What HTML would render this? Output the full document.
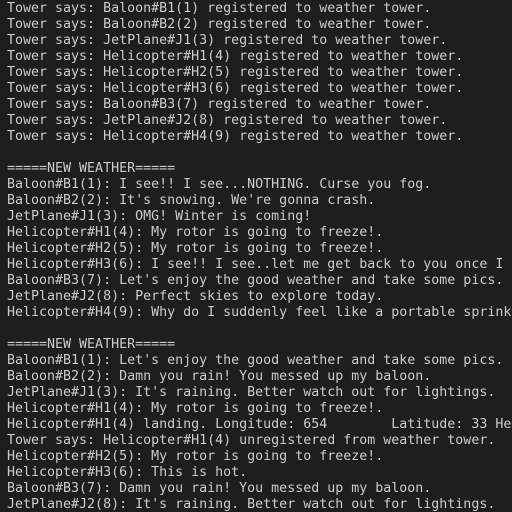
<!DOCTYPE html>
<html><head><style>
html,body{margin:0;padding:0;background:#1e1e1e;width:512px;height:512px;overflow:hidden}
pre{margin:0;position:absolute;left:7px;top:1px;width:505px;height:511px;overflow:hidden;font-family:"DejaVu Sans Mono","Liberation Mono",monospace;font-size:13.3px;line-height:16px;color:#cccccc;white-space:pre}
</style></head><body><pre>Tower says: Baloon#B1(1) registered to weather tower.
Tower says: Baloon#B2(2) registered to weather tower.
Tower says: JetPlane#J1(3) registered to weather tower.
Tower says: Helicopter#H1(4) registered to weather tower.
Tower says: Helicopter#H2(5) registered to weather tower.
Tower says: Helicopter#H3(6) registered to weather tower.
Tower says: Baloon#B3(7) registered to weather tower.
Tower says: JetPlane#J2(8) registered to weather tower.
Tower says: Helicopter#H4(9) registered to weather tower.

=====NEW WEATHER=====
Baloon#B1(1): I see!! I see...NOTHING. Curse you fog.
Baloon#B2(2): It's snowing. We're gonna crash.
JetPlane#J1(3): OMG! Winter is coming!
Helicopter#H1(4): My rotor is going to freeze!.
Helicopter#H2(5): My rotor is going to freeze!.
Helicopter#H3(6): I see!! I see..let me get back to you once I
Baloon#B3(7): Let's enjoy the good weather and take some pics.
JetPlane#J2(8): Perfect skies to explore today.
Helicopter#H4(9): Why do I suddenly feel like a portable sprinkler

=====NEW WEATHER=====
Baloon#B1(1): Let's enjoy the good weather and take some pics.
Baloon#B2(2): Damn you rain! You messed up my baloon.
JetPlane#J1(3): It's raining. Better watch out for lightings.
Helicopter#H1(4): My rotor is going to freeze!.
Helicopter#H1(4) landing. Longitude: 654        Latitude: 33 Height: 0
Tower says: Helicopter#H1(4) unregistered from weather tower.
Helicopter#H2(5): My rotor is going to freeze!.
Helicopter#H3(6): This is hot.
Baloon#B3(7): Damn you rain! You messed up my baloon.
JetPlane#J2(8): It's raining. Better watch out for lightings.</pre></body></html>
